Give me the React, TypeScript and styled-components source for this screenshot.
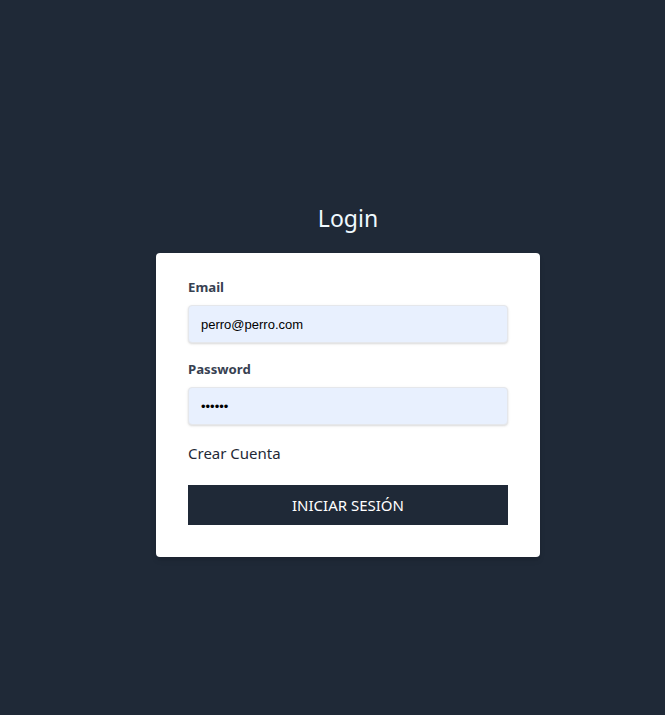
import React from "react";
import styled, { createGlobalStyle } from "styled-components";

const Global = createGlobalStyle`
  html, body { margin: 0; padding: 0; background: #1f2937; overflow-x: hidden; }
  body { font-family: "Noto Sans", "Open Sans", sans-serif; }
  * { box-sizing: border-box; }
`;

const Page = styled.main`
  min-height: 715px;
  width: 696px;
  background: #1f2937;
  display: flex;
  flex-direction: column;
  align-items: center;
  padding-top: 202px;
`;

const Title = styled.h1`
  margin: 0 0 19px;
  font-size: 23px;
  line-height: 32px;
  font-weight: 400;
  color: #f0f9ff;
`;

const Card = styled.form`
  width: 384px;
  background: #ffffff;
  border-radius: 4px;
  box-shadow: 0 4px 6px -1px rgba(0,0,0,0.1), 0 2px 4px -1px rgba(0,0,0,0.06);
  padding: 24px 32px 32px;
  display: flex;
  flex-direction: column;
`;

const Field = styled.div`
  display: flex;
  flex-direction: column;
  margin-bottom: 16px;
`;

const Label = styled.label`
  font-size: 13.2px;
  line-height: 20px;
  font-weight: 700;
  color: #374151;
  margin-bottom: 8px;
`;

const Input = styled.input`
  height: 38px;
  width: 100%;
  border: 1px solid #e5e7eb;
  border-radius: 4px;
  background: #e8f0fe;
  box-shadow: 0 1px 3px 0 rgba(0,0,0,0.1), 0 1px 2px 0 rgba(0,0,0,0.06);
  padding: 0 12px;
  font-family: "Liberation Sans", Arial, sans-serif;
  font-size: 13px;
  color: #000;
  outline: none;
`;

const LinkText = styled.a`
  font-size: 15px;
  line-height: 24px;
  color: #1f2937;
  text-decoration: none;
  margin-bottom: 20px;
`;

const Button = styled.button`
  height: 40px;
  width: 100%;
  border: none;
  background: #1f2937;
  color: #ffffff;
  font-family: "Noto Sans", "Open Sans", sans-serif;
  font-size: 15px;
  text-transform: uppercase;
  cursor: pointer;
`;

export default function App() {
  return (
    <>
      <Global />
      <Page>
        <Title>Login</Title>
        <Card onSubmit={(e) => e.preventDefault()}>
          <Field>
            <Label htmlFor="email">Email</Label>
            <Input id="email" type="email" defaultValue="perro@perro.com" />
          </Field>
          <Field>
            <Label htmlFor="password">Password</Label>
            <Input id="password" type="password" defaultValue="perro1" />
          </Field>
          <LinkText href="#">Crear Cuenta</LinkText>
          <Button type="submit">Iniciar Sesión</Button>
        </Card>
      </Page>
    </>
  );
}
